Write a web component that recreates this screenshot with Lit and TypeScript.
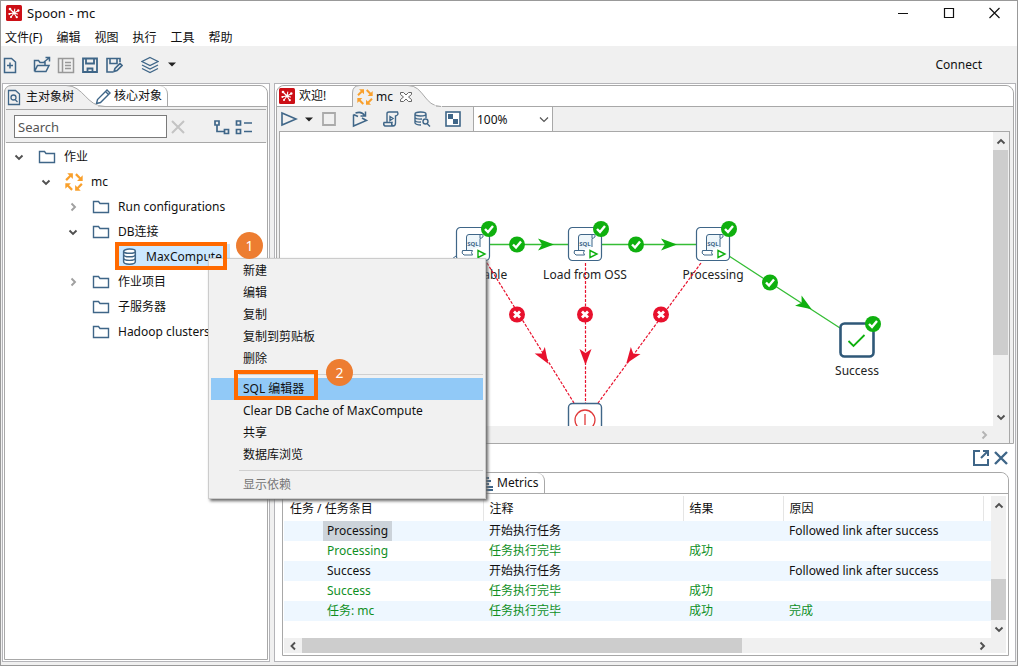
import { LitElement, html, svg, css } from "lit";
import { customElement } from "lit/decorators.js";
import { classMap } from "lit/directives/class-map.js";

const BLUE = "#3f6688";
const ORANGE = "#f9a02c";

const brand = html`<svg class="icon" width="16" height="16" viewBox="0 0 16 16">
  <rect width="16" height="16" rx="1.500" fill="#cc0f16" />
  <g stroke="#fff" stroke-width="1.100" stroke-linecap="round">
    <path d="M8 8 4 4M8 8l4.500-2.500M8 8l-5 .8M8 8l-3 4M8 8l2.500 4M8 8l3.500 1M8 8l.8-4" />
  </g>
  <g fill="#fff"><circle cx="4" cy="4" r="1.300" /><circle cx="12.300" cy="5.500" r="1.200" /><circle cx="3.500" cy="9" r="1" />
  <circle cx="5" cy="12" r="1" /><circle cx="10.800" cy="12.200" r="1.100" /><circle cx="8" cy="8" r="1.300" /></g>
</svg>`;

const job = (size: number) => html`<svg class="icon" width=${size} height=${size} viewBox="0 0 16 16">
  ${[0, 90, 180, 270].map((a) => svg`<g transform="rotate(${a} 8 8)">
    <path d="M2 .3H7V5.300Z" fill=${ORANGE} /><path d="M5.500 1.800 1 6.300" stroke=${ORANGE} stroke-width="2" />
  </g>`)}
</svg>`;

const folder = html`<svg class="icon" width="18" height="16" viewBox="0 0 18 16">
  <path d="M1.500 13.500V2.500H6.500L8 4.500H16.500V13.500Z" fill="none" stroke=${BLUE} stroke-width="1.400" />
</svg>`;

const database = html`<svg class="icon" width="18" height="16" viewBox="0 0 18 16">
  <g fill="#fff" stroke=${BLUE} stroke-width="1.400">
    <path d="M3 3v10c0 3 11 3 11 0V3" /><ellipse cx="8.500" cy="3" rx="5.500" ry="2" />
    <path d="M3 6.300c0 2.600 11 2.600 11 0M3 9.700c0 2.600 11 2.600 11 0" fill="none" />
  </g>
</svg>`;

const line = (w: number, d: string, color = BLUE, width = 1.5, h = 18) => html`<svg
  class="icon" width=${w} height=${h} viewBox="0 0 ${w} ${h}">
  <path d=${d} fill="none" stroke=${color} stroke-width=${width} />
</svg>`;

const chevron = (dir: string, color = "#505050") => {
  const d: Record<string, string> = {
    up: "M1.500 7.500 5 4l3.500 3.500",
    down: "M1.500 3.500 5 7l3.500-3.500",
    left: "M7 1.500 3.500 5 7 8.500",
    right: "M3.500 1.500 7 5 3.500 8.500",
  };
  return html`<svg class="icon" width="10" height="10" viewBox="0 0 10 10">
    <path d=${d[dir]} fill="none" stroke=${color} stroke-width="1.900" />
  </svg>`;
};

const caret = html`<svg class="icon" width="8" height="5" viewBox="0 0 8 5"><path d="M0 .5h8L4 4.500Z" fill="#222" /></svg>`;

const MENUS = ["文件(F)", "编辑", "视图", "执行", "工具", "帮助"];

type Row = { depth: number; label: string; icon: "folder" | "job" | "db"; open?: boolean };
const TREE: Row[] = [
  { depth: 0, label: "作业", icon: "folder", open: true },
  { depth: 1, label: "mc", icon: "job", open: true },
  { depth: 2, label: "Run configurations", icon: "folder", open: false },
  { depth: 2, label: "DB连接", icon: "folder", open: true },
  { depth: 3, label: "MaxCompute", icon: "db" },
  { depth: 2, label: "作业项目", icon: "folder", open: false },
  { depth: 2, label: "子服务器", icon: "folder" },
  { depth: 2, label: "Hadoop clusters", icon: "folder" },
];

const LOG = [
  { name: "Processing", note: "开始执行任务", result: "", reason: "Followed link after success", done: false },
  { name: "Processing", note: "任务执行完毕", result: "成功", reason: "", done: true },
  { name: "Success", note: "开始执行任务", result: "", reason: "Followed link after success", done: false },
  { name: "Success", note: "任务执行完毕", result: "成功", reason: "", done: true },
  { name: "任务: mc", note: "任务执行完毕", result: "成功", reason: "完成", done: true },
];

const STEPS = [
  { x: 193, y: 113, label: "Create table" },
  { x: 305, y: 113, label: "Load from OSS" },
  { x: 433, y: 113, label: "Processing" },
];

const okMark = (x: number, y: number) => svg`<g transform="translate(${x} ${y})">
  <circle r="8" fill="#0fb00f" /><path d="M-4 0-1 3 4-3" fill="none" stroke="#fff" stroke-width="2.400" />
</g>`;
const failMark = (x: number, y: number) => svg`<g transform="translate(${x} ${y})">
  <circle r="8" fill="#e8112d" /><path d="M-3-3 3 3M3-3-3 3" stroke="#fff" stroke-width="2.800" />
</g>`;
const arrow = (x: number, y: number, angle: number, color: string) => svg`<path
  d="M8 0-8-6-4 0-8 6Z" fill=${color} transform="translate(${x} ${y}) rotate(${angle})" />`;

@customElement("app-root")
export class AppRoot extends LitElement {
  static styles = css`
    :host {
      display: flex;
      flex-direction: column;
      position: relative;
      box-sizing: border-box;
      min-height: 100vh;
      border: 1px solid #999;
      background: #fff;
      color: #111;
      font: 12px/20px "Noto Sans", "Noto Sans CJK SC", sans-serif;
      overflow: hidden;
    }
    button, input, select { font-family: "Noto Sans", "Noto Sans CJK SC", sans-serif; }
    * { box-sizing: border-box; }
    .icon { display: block; flex: none; }
    button {
      display: flex; align-items: center; padding: 0; border: 0;
      background: none; color: inherit; font-size: 12px; line-height: 20px; white-space: nowrap;
    }
    .titlebar { display: flex; align-items: center; height: 24px; padding: 0 14px 0 5px; gap: 5px; }
    .title { flex: 1; margin: 0; font-size: 13px; font-weight: 400; }
    .window-buttons { display: flex; gap: 30px; }
    .menubar { display: flex; align-items: center; height: 21px; padding: 4px 0 0 4px; gap: 14px; }
    .toolbar { display: flex; align-items: center; height: 37px; padding-right: 35px; background: #f0f0f0; }
    .toolbar .tools { display: flex; flex: 1; gap: 6px; }
    .toolbar .wide { margin-left: 8px; }
    .toolbar .layers { margin-left: 12px; }
    .toolbar .drop { margin-left: 3px; }
    .main { display: flex; flex: 1; gap: 4px; padding: 0 1px 3px; background: #f0f0f0; }
    .side, .work { display: flex; flex-direction: column; border: 1px solid #b4b4b8; background: #fff; padding: 1px; }
    .side { width: 268px; flex: none; }
    .work { flex: 1; min-width: 0; }
    .folder { display: flex; flex-direction: column; flex: 1; min-height: 0; border: 1px solid #a8a8a8; border-radius: 8px 8px 0 0; background: #f0f0f0; }
    .tabs { display: flex; height: 21px; background: #fff; border-radius: 8px 8px 0 0; }
    .tabs .rest { flex: 1; border-bottom: 1px solid #a8a8a8; }
    .tab { gap: 3px; border-bottom: 1px solid #a8a8a8; }
    .tab.active { position: relative; isolation: isolate; border-bottom: 0; }
    .shape { position: absolute; left: -1px; top: -1px; z-index: -1; }
    .tab.tree-tab { width: 101px; padding-left: 2px; }
    .tab.core-tab { width: 74px; margin-left: -12px; padding-left: 1px; border-right: 1px solid #a8a8a8; border-radius: 0 8px 0 0; }
    .tab.home-tab { width: 76px; padding-left: 2px; gap: 4px; }
    .tab.job-tab { width: 89px; padding-left: 4px; }
    .search { display: flex; align-items: center; height: 34px; margin: 2px 1px 0; padding: 1px 13px 0 8px; border: 1px solid #a8a8a8; border-width: 1px 0; }
    .search input { width: 153px; height: 23px; margin-right: 3px; padding: 0 3px; border: 1px solid #7a7a7a; font-size: 13px; background: #fff; outline: 0; }
    .search input::placeholder { color: #555; opacity: 1; }
    .search .end { margin-left: auto; display: flex; gap: 4px; }
    .tree { flex: 1; margin: 0; padding: 1px 0 0 9px; list-style: none; background: #fff; }
    .node { display: flex; align-items: center; height: 25px; gap: 8px; white-space: nowrap; }
    .node .twist { width: 12px; margin-right: 4px; }
    .d1 { padding-left: 27px; } .d2 { padding-left: 54px; } .d3 { padding-left: 81px; }
    .node.db .name { background: #cce8ff; margin-left: -8px; padding: 0 8px 0 5px; line-height: 25px; }
    .node.db .icon { background: #cce8ff; height: 25px; padding: 4px 0; width: 22px; }
    .editor { display: flex; flex-direction: column; flex: 1; min-height: 0; }
    .job-tools { display: flex; align-items: center; height: 24px; padding-left: 3px; }
    .job-tools .gap { margin-left: 13px; }
    .job-tools .near { margin-left: 7px; }
    .zoom { position: relative; display: flex; align-items: center; width: 80px; height: 24px; margin-left: 11px; background: #fff; border: 1px solid #a8a8a8; border-width: 0 1px; }
    .zoom select { width: 100%; height: 24px; padding: 0 0 0 3px; border: 0; appearance: none; background: none; font-size: 12px; color: #111; }
    .zoom .icon { position: absolute; right: 3px; pointer-events: none; }
    .stage { display: grid; grid-template-columns: 1fr 15px; grid-template-rows: 1fr 17px; flex: 1; min-height: 0; margin: 0 3px 0 2px; padding-right: 1px; border: 1px solid #a8a8a8; border-width: 1px 1px 0 1px; }
    .canvas { overflow: hidden; background: #fff; height: 294px; min-width: 0; }
    .canvas text { font-size: 12px; text-anchor: middle; fill: #222; }
    .canvas .sql { font-size: 6px; font-weight: 700; fill: #3f6688; }
    .vscroll, .hscroll { display: flex; align-items: center; background: #f0f0f0; }
    .vscroll { flex-direction: column; padding: 4px 0; gap: 4px; }
    .vscroll .thumb { width: 15px; background: #cdcdcd; }
    .hscroll { padding: 0 4px; gap: 4px; }
    .hscroll .thumb { height: 15px; background: #cdcdcd; }
    .push { margin-top: auto; }
    .right { margin-left: auto; }
    .results-head { display: flex; align-items: center; justify-content: flex-end; height: 28px; padding: 0 5px; gap: 3px; background: #fff; }
    .results { flex: none; margin: 0 5px 4px 6px; border: 1px solid #a8a8a8; border-radius: 0 8px 0 0; background: #fff; }
    .results .tabs { padding-left: 196px; border-radius: 0 8px 0 0; }
    .tab.metrics { width: 66px; gap: 4px; border-right: 1px solid #a8a8a8; border-radius: 0 8px 0 0; }
    .grid { display: grid; grid-template-columns: 1fr 15px; grid-template-rows: auto 15px; padding: 2px 2px 2px 1px; }
    .scroll { height: 142px; overflow: hidden; }
    table { width: 100%; border-collapse: collapse; table-layout: fixed; }
    th, td { height: 20px; padding: 0 0 0 6px; text-align: left; font-weight: 400; white-space: nowrap; }
    th { height: 25px; border-right: 1px solid #e5e5e5; }
    th:last-child { border: 0; }
    tbody tr:nth-child(odd) { background: #eef7ff; }
    td:first-child { padding-left: 39px; }
    .item { display: inline-block; padding: 0 4px; }
    .item.sel { background: #ccd3da; }
    tr.done { color: #0f8f1f; }
    .c0 { width: 199px; } .c1 { width: 200px; } .c3 { width: 100px; }
    .menu { position: absolute; left: 207px; top: 257px; width: 278px; padding: 1px 2px 2px; border: 1px solid #ccc; background: #f1f1f1; box-shadow: 2px 2px 3px #666; }
    .menu button { width: 100%; height: 22px; padding-left: 32px; }
    .menu button.hot { background: #91c9f7; }
    .menu button:disabled { color: #777; }
    .menu hr { height: 1px; margin: 4px 0 3px 28px; border: 0; background: #d0d0d0; }
    .frame { position: absolute; border: 4px solid #ff6a00; }
    .frame.one { left: 114px; top: 241px; width: 112px; height: 28px; }
    .frame.two { left: 233px; top: 369px; width: 84px; height: 30px; }
    .badge { position: absolute; width: 27px; height: 27px; border-radius: 50%; background: #ed7d31; color: #fff; text-align: center; line-height: 27px; font-size: 14px; }
    .badge.one { left: 235px; top: 231px; }
    .badge.two { left: 325px; top: 358px; }
  `;

  private treeRow(r: Row) {
    const twist = r.open === undefined ? "" : r.open ? chevron("down") : chevron("right", "#a0a0a0");
    const icon = r.icon === "db" ? database : r.icon === "job" ? job(18) : folder;
    return html`<li class=${classMap({ node: true, ["d" + r.depth]: true, db: r.icon === "db" })}>
      <span class="twist">${twist}</span>${icon}<span class="name">${r.label}</span>
    </li>`;
  }

  private diagram() {
    const green = "#0fb00f";
    const red = "#e8112d";
    return html`<svg width="714" height="294" viewBox="0 0 714 294" role="img" aria-label="mc">
      <g stroke="#35bd35" stroke-width="1.300">
        <path d="M210 112.500H288M322 112.500H416M449 124 560 196" />
      </g>
      <path d="M176 124 168 130" stroke=${BLUE} />
      ${STEPS.map((s) => svg`<text x=${s.x} y=${s.y + 34}>${s.label}</text>
        <g transform="translate(${s.x - 17} ${s.y - 18})">
          <rect x=".5" y=".5" width="33" height="33" rx="4" fill="#fff" stroke=${BLUE} stroke-width="1.200" />
          <path d="M10.500 24V10Q10.500 7.500 13 7.500H26.500Q28.500 10.500 24 11.500V20" fill="#eef6fa" stroke=${BLUE} />
          <path d="M24 11V8" stroke=${BLUE} />
          <path d="M6.500 23.500H16.500q-2 2 0 4.500H8q-3-1.500-1.500-4.500Z" fill="#fff" stroke=${BLUE} />
          <rect x="20" y="21" width="12" height="11" fill="#fff" />
          <path d="M22 23.500V30.500L29 27Z" fill="#fff" stroke=${green} stroke-width="1.400" />
          <text class="sql" x="17" y="18.500">SQL</text>
        </g>`)}
      <g stroke=${red} stroke-width="1.200" stroke-dasharray="3 1.500">
        <path d="M207 131 294 271M305.500 131V271M421 131 318 271" />
      </g>
      ${STEPS.map((s) => okMark(s.x + 16, s.y - 16))}
      ${okMark(237, 112.5)}${okMark(356, 112.5)}${okMark(490, 150.5)}
      ${arrow(266, 112.5, 0, green)}${arrow(389, 112.5, 0, green)}${arrow(525, 173, 33, green)}
      ${failMark(237, 182.5)}${failMark(305, 182.5)}${failMark(381, 182.5)}
      ${arrow(264, 225, 58, red)}${arrow(305.5, 225, 90, red)}${arrow(351, 225, 126, red)}
      <g transform="translate(288 271)">
        <rect x=".5" y=".5" width="33" height="33" rx="4" fill="#fff" stroke=${BLUE} stroke-width="1.400" />
        <circle cx="17" cy="17" r="10" fill="none" stroke="#e03a3a" stroke-width="1.300" />
        <path d="M17 11V22" stroke="#e03a3a" stroke-width="1.300" />
      </g>
      <g transform="translate(559 190)">
        <rect x="1.500" y="1.500" width="33" height="33" rx="4" fill="#fff" stroke="#2f5878" stroke-width="2.600" />
        <path d="M9.500 19l5 5 11-11" fill="none" stroke=${green} stroke-width="1.800" />
      </g>
      ${okMark(593, 192)}
      <text x="577" y="243">Success</text>
    </svg>`;
  }

  render() {
    return html`
      <header class="titlebar">
        ${brand}
        <h1 class="title">Spoon - mc</h1>
        <div class="window-buttons">
          <button aria-label="Minimize">${line(16, "M3 9.500H13", "#111", 1)}</button>
          <button aria-label="Maximize">${line(16, "M3.500 4.500H12.500V13.500H3.500Z", "#111", 1.2)}</button>
          <button aria-label="Close">${line(16, "M2.500 4 12.500 14M12.500 4 2.500 14", "#111", 1.2)}</button>
        </div>
      </header>
      <nav class="menubar">${MENUS.map((m) => html`<button>${m}</button>`)}</nav>
      <div class="toolbar">
        <div class="tools">
          <button aria-label="New">${line(18, "M3.500 2.500H10.500L14.500 6V16.500H3.500ZM9 6.500V12.500M6 9.500H12")}</button>
          <button class="wide" aria-label="Open">${line(18, "M1.500 15.500V4.500H5.500L7 6.500H12V9M1.500 15.500 4.500 9.500H16L13 15.500H1.500M11 6 16 2M12.500 1.500H16.500V5.500")}</button>
          <button aria-label="Explore">${line(18, "M1.500 2.500H16.500V16.500H1.500ZM5.500 2.500V16.500M8 6.500H14M8 9.500H14M8 12.500H14", "#999")}</button>
          <button aria-label="Save">${line(18, "M2 2.500H16V16H2ZM5 3V7.500H13V3M6.500 16V12.500H11.500V16", BLUE, 1.8)}</button>
          <button aria-label="Save as">${line(18, "M8 16H2V2.500H15V6M5 3V7.500H12V3M9 15.500 10 12.500 15 7.500 17 9.500 12 14.500Z", BLUE, 1.6)}</button>
          <button class="layers" aria-label="Perspectives">${line(18, "M9 1.500 17 5.500 9 9.500 1 5.500ZM1 9 9 13 17 9M1 12.500 9 16.500 17 12.500", BLUE, 1.3)}</button>
          <button class="drop" aria-label="Choose perspective">${caret}</button>
        </div>
        <button>Connect</button>
      </div>
      <main class="main">
        <section class="side">
          <div class="folder">
            <div class="tabs">
              <button class="tab active tree-tab">
                <svg class="shape" width="102" height="22" viewBox="0 0 102 22">
                  <path d="M.5 22V8Q.5.500 8 .5H62C80 .5 82 21.500 101 21.500V22Z" fill="#f0f0f0" stroke="#a8a8a8" />
                  <path d="M1 21.500H94" stroke="#f0f0f0" stroke-width="2" />
                </svg>
                ${line(16, "M1.500 2.500H8.500L12.500 6V16.500H1.500ZM9 9.500A2.500 2.500 0 1 0 4 9.500 2.500 2.500 0 1 0 9 9.500M8 11.500 10.500 14", BLUE, 1.3)}主对象树
              </button>
              <button class="tab core-tab">${line(16, "M1.500 16.500 2.500 12.500 12 3 15 6 5.500 15.500ZM10.500 4.500 13.500 7.500", BLUE, 1.4)}核心对象</button>
              <span class="rest"></span>
            </div>
            <div class="search">
              <input type="text" placeholder="Search" aria-label="Search" />
              <button aria-label="Clear">${line(16, "M2 3 14 15M14 3 2 15", "#c4c4c4", 2)}</button>
              <div class="end">
                <button aria-label="Expand all">${line(18, "M2 3H6V7H2ZM11.500 11.500H15.500V15.500H11.500ZM4 7.500V13.500H11", BLUE, 1.7)}</button>
                <button aria-label="Collapse all">${line(18, "M1.500 3H5.500V7H1.500ZM1.500 11.500H5.500V15.500H1.500ZM9 5H17M9 13.500H17", BLUE, 1.7)}</button>
              </div>
            </div>
            <ul class="tree">${TREE.map((r) => this.treeRow(r))}</ul>
          </div>
        </section>
        <section class="work">
          <div class="folder editor">
            <div class="tabs">
              <button class="tab home-tab">${brand}欢迎!</button>
              <button class="tab active job-tab">
                <svg class="shape" width="90" height="22" viewBox="0 0 90 22">
                  <path d="M.5 22V8Q.5.500 8 .5H56C72 .5 72 21.500 89 21.500V22Z" fill="#f0f0f0" stroke="#a8a8a8" />
                  <path d="M1 21.500H84" stroke="#f0f0f0" stroke-width="2" />
                </svg>
                ${job(16)}mc
                <svg class="icon" width="18" height="12" viewBox="0 0 18 12">
                  <path d="M4.500 1.500h3L10 4l2.500-2.500h3v2L12.500 6l3 2.500v2h-3L10 8l-2.500 2.500h-3v-2L7.500 6l-3-2.500Z" fill="#fff" stroke="#666" />
                </svg>
              </button>
              <span class="rest"></span>
            </div>
            <div class="job-tools">
              <button aria-label="Run">${line(18, "M2 3 16 9 2 15Z", BLUE, 1.6)}</button>
              <button class="near" aria-label="Run options">${caret}</button>
              <button class="near" aria-label="Stop">${line(18, "M3 3H15V15H3Z", "#aaa", 1.8)}</button>
              <button class="gap" aria-label="Replay">${line(18, "M2.500 4.500V16L15.500 10.500 11 8M2.500 4.500 7 6.500M4.500 3Q11 1 13.500 5.500M9.500 6H14.500V1.500", BLUE, 1.5)}</button>
              <button class="gap" aria-label="SQL">${line(18, "M5 13V3.500Q5 2 7 2H15.500Q17 5 13.500 6V13Q13.500 16 11 16H3Q1 15 2 12.500H10Q9 15 11 16M8 6.500 11 8.500 8 10.500Z", BLUE, 1.4)}</button>
              <button class="gap" aria-label="Explore database">${line(18, "M2 4Q2 2 7.500 2T13 4 7.500 6 2 4V13Q3 15 8 15M2 7.500Q3 9.500 9 9M2 10.500Q3 12.500 8 12M13 4V8M15 11.500A2.500 2.500 0 1 0 10 11.500 2.500 2.500 0 1 0 15 11.500M14 13.500 17 16.500", BLUE, 1.4)}</button>
              <button class="gap" aria-label="Show results">
                <svg class="icon" width="18" height="18" viewBox="0 0 18 18"><rect x="2" y="2" width="14" height="14" fill="#fff" stroke=${BLUE} stroke-width="1.600" /><path d="M4 4h5v5H4ZM9 9h5v5H9Z" fill=${BLUE} /></svg>
              </button>
              <label class="zoom">
                <select aria-label="Zoom"><option>100%</option></select>
                ${line(10, "M1 3.500 5 7.500 9 3.500", "#555", 1.2, 10)}
              </label>
            </div>
            <div class="stage">
              <div class="canvas">${this.diagram()}</div>
              <div class="vscroll">
                ${chevron("up")}
                <span class="thumb" style="height: 205px"></span>
                <span class="push">${chevron("down")}</span>
              </div>
              <div class="hscroll"><span class="right">${chevron("right", "#b4b4b4")}</span></div>
              <div class="hscroll"></div>
            </div>
          </div>
          <div class="results-head">
            <button aria-label="Detach">${line(18, "M8 2H2V16H16V10M11 2H16V7M16 2 9 9", BLUE, 2)}</button>
            <button aria-label="Close results">${line(16, "M2 3 14 15M14 3 2 15", BLUE, 2.4)}</button>
          </div>
          <div class="results">
            <div class="tabs">
              <button class="tab metrics">${line(14, "M2 4H10M4 7H12M2 10H10M5 13H14M2 16H14", BLUE, 1.8)}Metrics</button>
              <span class="rest"></span>
            </div>
            <div class="grid">
              <div class="scroll">
                <table>
                  <colgroup><col class="c0" /><col class="c1" /><col class="c3" /><col class="c1" /><col /></colgroup>
                  <thead><tr><th>任务 / 任务条目</th><th>注释</th><th>结果</th><th>原因</th><th></th></tr></thead>
                  <tbody>
                    ${LOG.map((l, i) => html`<tr class=${classMap({ done: l.done })}>
                      <td><span class=${classMap({ item: true, sel: i === 0 })}>${l.name}</span></td>
                      <td>${l.note}</td><td>${l.result}</td><td>${l.reason}</td><td></td>
                    </tr>`)}
                  </tbody>
                </table>
              </div>
              <div class="vscroll">
                ${chevron("up")}
                <span class="thumb push" style="height: 41px"></span>
                ${chevron("down")}
              </div>
              <div class="hscroll">
                ${chevron("left")}
                <span class="thumb" style="width: 63%"></span>
                <span class="right">${chevron("right")}</span>
              </div>
              <div class="hscroll"></div>
            </div>
          </div>
        </section>
      </main>
      <div class="menu" role="menu">
        <button role="menuitem">新建</button>
        <button role="menuitem">编辑</button>
        <button role="menuitem">复制</button>
        <button role="menuitem">复制到剪贴板</button>
        <button role="menuitem">删除</button>
        <hr />
        <button role="menuitem" class="hot">SQL 编辑器</button>
        <button role="menuitem">Clear DB Cache of MaxCompute</button>
        <button role="menuitem">共享</button>
        <button role="menuitem">数据库浏览</button>
        <hr />
        <button role="menuitem" disabled>显示依赖</button>
      </div>
      <span class="frame one"></span><span class="badge one">1</span>
      <span class="frame two"></span><span class="badge two">2</span>
    `;
  }
}
